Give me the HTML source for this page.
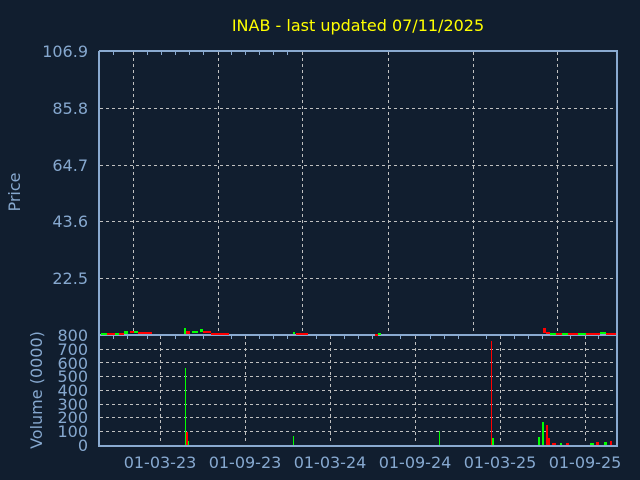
<!DOCTYPE html>
<html><head><meta charset="utf-8"><style>
html,body{margin:0;padding:0;background:#111e2f;width:640px;height:480px;overflow:hidden}
svg{display:block}
text{font-family:"DejaVu Sans","Liberation Sans",sans-serif;fill:#86a8cf}
</style></head><body>
<svg width="640" height="480" viewBox="0 0 640 480" xmlns="http://www.w3.org/2000/svg">
<rect width="640" height="480" fill="#111e2f"/>
<text x="358" y="31" font-size="16" text-anchor="middle" style="fill:#ffff00">INAB - last updated 07/11/2025</text>
<g stroke="#c0c0c0" stroke-dasharray="3,3" stroke-width="1" fill="none">
<path d="M100 108.5H616M100 165.5H616M100 221.5H616M100 278.5H616"/>
<path d="M133.5 52V334M218.5 52V334M302.5 52V334M388.5 52V334M473.5 52V334M557.5 52V334"/>
<path d="M100 349.5H616M100 362.5H616M100 376.5H616M100 390.5H616M100 404.5H616M100 417.5H616M100 431.5H616"/>
<path d="M160.5 336V444M245.5 336V444M330.5 336V444M415.5 336V444M500.5 336V444M585.5 336V444"/>
</g>
<g stroke="#8aaad0" stroke-width="1" fill="none">
<path d="M113.5 51V55M147.5 51V55M161.5 51V55M175.5 51V55M189.5 51V55M203.5 51V55M231.5 51V55M245.5 51V55M259.5 51V55M273.5 51V55M287.5 51V55"/>
<path d="M113.5 335V339M127.5 335V339M147.5 335V339M175.5 335V339M189.5 335V339M203.5 335V339M231.5 335V339M259.5 335V339M273.5 335V339M287.5 335V339M316.5 335V339M344.5 335V339M358.5 335V339M372.5 335V339M400.5 335V339M430.5 335V339M444.5 335V339M458.5 335V339M486.5 335V339M514.5 335V339M528.5 335V339M542.5 335V339M570.5 335V339M598.5 335V339"/>
</g>
<g stroke="#8aaad0" stroke-width="2" fill="none">
<path d="M99 51V446H617V51H99"/>
<path d="M99 335H617"/>
</g>
<g fill="#00ff00">
<rect x="101" y="333" width="6" height="2"/><rect x="115" y="333" width="4" height="2"/><rect x="124" y="331" width="4" height="3"/><rect x="134" y="331" width="4" height="2"/>
<rect x="184" y="328" width="2" height="6"/><rect x="192" y="331" width="6" height="2"/><rect x="200" y="329" width="3" height="3"/>
<rect x="293" y="332" width="2" height="2"/><rect x="378" y="333" width="3" height="2"/>
<rect x="550" y="333" width="6" height="2"/><rect x="562" y="333" width="6" height="2"/><rect x="578" y="333" width="8" height="2"/><rect x="600" y="332" width="6" height="2"/>
</g>
<g fill="#ff0000">
<rect x="107" y="333" width="8" height="2"/><rect x="119" y="333" width="5" height="2"/><rect x="130" y="331" width="4" height="2"/><rect x="138" y="332" width="14" height="2"/>
<rect x="186" y="331" width="4" height="3"/><rect x="203" y="331" width="8" height="2"/><rect x="211" y="333" width="18" height="2"/>
<rect x="296" y="333" width="12" height="2"/><rect x="375" y="334" width="3" height="2"/>
<rect x="543" y="328" width="3" height="5"/><rect x="546" y="332" width="4" height="2"/><rect x="556" y="333" width="6" height="2"/><rect x="568" y="333" width="10" height="2"/><rect x="586" y="333" width="14" height="2"/><rect x="606" y="333" width="10" height="2"/>
</g>
<g fill="#00ff00">
<rect x="185" y="368" width="1" height="77"/><rect x="187" y="441" width="2" height="4"/>
<rect x="293" y="436" width="1" height="9"/><rect x="439" y="431" width="1" height="14"/>
<rect x="492" y="438" width="2" height="7"/><rect x="542" y="422" width="2" height="23"/><rect x="538" y="437" width="2" height="8"/>
<rect x="560" y="443" width="2" height="2"/><rect x="590" y="443" width="4" height="2"/><rect x="604" y="442" width="3" height="3"/>
</g>
<g fill="#ff0000">
<rect x="186" y="432" width="2" height="13"/><rect x="491" y="341" width="1" height="104"/>
<rect x="546" y="425" width="2" height="20"/><rect x="548" y="438" width="2" height="7"/><rect x="552" y="443" width="4" height="2"/><rect x="566" y="443" width="3" height="2"/><rect x="596" y="442" width="3" height="3"/><rect x="610" y="441" width="2" height="4"/>
</g>
<g font-size="16" text-anchor="end">
<text x="88" y="57">106.9</text><text x="88" y="114">85.8</text><text x="88" y="171">64.7</text>
<text x="88" y="227">43.6</text><text x="88" y="284">22.5</text>
</g>
<g font-size="16" text-anchor="end">
<text x="88" y="341">800</text><text x="88" y="355">700</text><text x="88" y="369">600</text>
<text x="88" y="382">500</text><text x="88" y="396">400</text><text x="88" y="410">300</text>
<text x="88" y="423">200</text><text x="88" y="437">100</text><text x="88" y="451">0</text>
</g>
<g font-size="16" text-anchor="middle">
<text x="160" y="468">01-03-23</text><text x="245" y="468">01-09-23</text><text x="330" y="468">01-03-24</text>
<text x="415" y="468">01-09-24</text><text x="500" y="468">01-03-25</text><text x="585" y="468">01-09-25</text>
</g>
<text transform="translate(20,192) rotate(-90)" font-size="16" text-anchor="middle">Price</text>
<text transform="translate(42,390) rotate(-90)" font-size="16" text-anchor="middle">Volume (0000)</text>
</svg>
</body></html>
